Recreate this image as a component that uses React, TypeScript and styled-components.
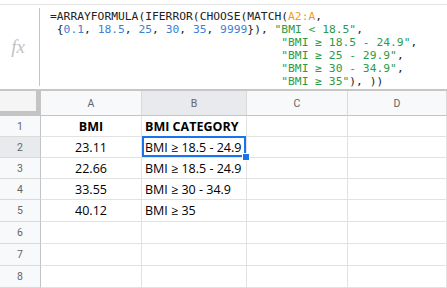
import React from 'react'
import styled, {createGlobalStyle, css} from 'styled-components'

const GlobalStyle = createGlobalStyle`
	html, body {
		margin: 0;
		padding: 0;
		background: #fff;
	}
	body {
		width: 447px;
		height: 288px;
		overflow: hidden;
		font-family: "Open Sans", "Liberation Sans", sans-serif;
	}
`

type CellProps = {
	align?: 'left' | 'center'
	bold?: boolean
	selected?: boolean
}

type HeaderProps = {
	active?: boolean
}

type RowProps = {
	tall?: boolean
}

const Sheet = styled.div`
	display: flex;
	flex-direction: column;
	width: 447px;
	height: 288px;
	overflow: hidden;
`

const FormulaBar = styled.div`
	display: flex;
	margin-top: 4px;
	height: 90px;
	border-top: 1px solid #e3e3e3;
	border-bottom: 2px solid #c6c6c6;
`

const FxCell = styled.div`
	width: 40px;
	margin: 3px 0;
	border-right: 1px solid #c4c4c4;
	display: flex;
	align-items: center;
	justify-content: center;
	font-family: "Liberation Serif", serif;
	font-style: italic;
	font-size: 19px;
	color: #c2c2c2;
	padding-right: 3px;
	box-sizing: border-box;
`

const FormulaText = styled.pre`
	margin: 0;
	padding: 5px 0 0 10px;
	font-family: "DejaVu Sans Mono", monospace;
	font-size: 11.3px;
	line-height: 13px;
	color: #222;
	white-space: pre;
`

const Num = styled.span`
	color: #3d7fd6;
`

const Ref = styled.span`
	color: #f09a1a;
`

const Str = styled.span`
	color: #2f9a45;
`

const Grid = styled.div`
	display: grid;
	grid-template-columns: 41px 101px 105px 101px 1fr;
`

const Row = styled.div<RowProps>`
	display: contents;
	& > * {
		height: ${p => (p.tall ? 22 : 21)}px;
	}
`

const HeaderRow = styled.div`
	display: contents;
	& > * {
		height: 25px;
	}
`

const Corner = styled.div`
	box-sizing: border-box;
	background: #f5f5f5;
	border-right: 5px solid #c4c4c4;
	border-bottom: 5px solid #c4c4c4;
`

const ColHeader = styled.div<HeaderProps>`
	box-sizing: border-box;
	display: flex;
	align-items: center;
	justify-content: center;
	background: ${p => (p.active ? '#e8eaed' : '#f8f9fa')};
	border-right: 1px solid #dadada;
	border-bottom: 1px solid #c4c4c4;
	font-family: Roboto, "Liberation Sans", sans-serif;
	font-size: 10.5px;
	color: #666;
`

const RowHeader = styled.div<HeaderProps>`
	box-sizing: border-box;
	display: flex;
	align-items: center;
	justify-content: center;
	background: ${p => (p.active ? '#e8eaed' : '#f8f9fa')};
	border-right: 1px solid #c4c4c4;
	border-bottom: 1px solid #dadada;
	font-family: Roboto, "Liberation Sans", sans-serif;
	font-size: 10.5px;
	color: #666;
`

const Cell = styled.div<CellProps>`
	position: relative;
	box-sizing: border-box;
	display: flex;
	align-items: center;
	justify-content: ${p => (p.align === 'center' ? 'center' : 'flex-start')};
	padding: 0 3px;
	border-right: 1px solid #e2e2e2;
	border-bottom: 1px solid #e2e2e2;
	font-size: 12.5px;
	font-weight: ${p => (p.bold ? 700 : 400)};
	color: #000;
	white-space: nowrap;

	${p => p.selected && css`
		&::before {
			content: '';
			position: absolute;
			top: -1px;
			left: 0;
			right: 0;
			bottom: 0;
			border: 2px solid #1a73e8;
		}
		&::after {
			content: '';
			position: absolute;
			right: -4px;
			bottom: -4px;
			width: 6px;
			height: 6px;
			background: #1a73e8;
			border: 1px solid #fff;
			z-index: 2;
		}
	`}
`

const rows = [
	{bmi: '23.11', category: 'BMI ≥ 18.5 - 24.9'},
	{bmi: '22.66', category: 'BMI ≥ 18.5 - 24.9'},
	{bmi: '33.55', category: 'BMI ≥ 30 - 34.9'},
	{bmi: '40.12', category: 'BMI ≥ 35'},
]

const pad = ' '.repeat(34)

const App = () => {
	return (
		<>
			<GlobalStyle/>
			<Sheet>
				<FormulaBar>
					<FxCell>fx</FxCell>
					<FormulaText>
						{'=ARRAYFORMULA(IFERROR(CHOOSE(MATCH('}<Ref>A2:A</Ref>{',\n'}
						{' {'}<Num>0.1</Num>{', '}<Num>18.5</Num>{', '}<Num>25</Num>{', '}<Num>30</Num>{', '}<Num>35</Num>{', '}<Num>9999</Num>{'}), '}<Str>"BMI &lt; 18.5"</Str>{',\n'}
						{pad}<Str>"BMI ≥ 18.5 - 24.9"</Str>{',\n'}
						{pad}<Str>"BMI ≥ 25 - 29.9"</Str>{',\n'}
						{pad}<Str>"BMI ≥ 30 - 34.9"</Str>{',\n'}
						{pad}<Str>"BMI ≥ 35"</Str>{'), ))'}
					</FormulaText>
				</FormulaBar>
				<Grid>
					<HeaderRow>
						<Corner/>
						<ColHeader>A</ColHeader>
						<ColHeader active>B</ColHeader>
						<ColHeader>C</ColHeader>
						<ColHeader>D</ColHeader>
					</HeaderRow>
					<Row>
						<RowHeader>1</RowHeader>
						<Cell align="center" bold>BMI</Cell>
						<Cell bold>BMI CATEGORY</Cell>
						<Cell/>
						<Cell/>
					</Row>
					{rows.map((r, i) => (
						<Row key={r.bmi} tall={i === 3}>
							<RowHeader active={i === 0}>{i + 2}</RowHeader>
							<Cell align="center">{r.bmi}</Cell>
							<Cell selected={i === 0}>{r.category}</Cell>
							<Cell/>
							<Cell/>
						</Row>
					))}
					{[6, 7, 8].map(n => (
						<Row key={n} tall>
							<RowHeader>{n}</RowHeader>
							<Cell/>
							<Cell/>
							<Cell/>
							<Cell/>
						</Row>
					))}
				</Grid>
			</Sheet>
		</>
	)
}

export default App
